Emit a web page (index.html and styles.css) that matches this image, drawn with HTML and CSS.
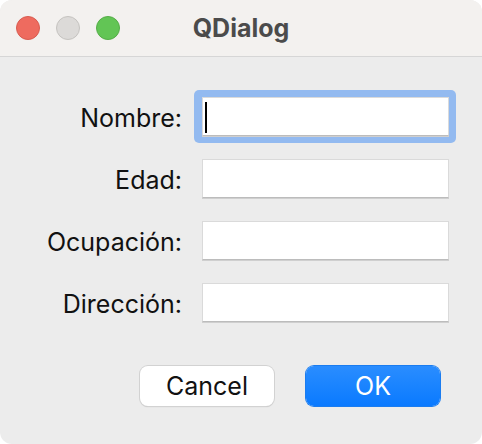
FILE: index.html
```html
<!DOCTYPE html>
<html>
<head>
<meta charset="utf-8">
<link rel="stylesheet" href="styles.css">
</head>
<body>
<div class="window">
  <div class="titlebar">
    <div class="lights">
      <span class="light red"></span>
      <span class="light gray"></span>
      <span class="light green"></span>
    </div>
    <div class="title">QDialog</div>
  </div>
  <div class="content">
    <div class="form">
      <label class="label">Nombre:</label>
      <div class="field focus"><input class="input" type="text"><span class="caret"></span></div>
      <label class="label">Edad:</label>
      <div class="field"><input class="input" type="text"></div>
      <label class="label">Ocupación:</label>
      <div class="field"><input class="input" type="text"></div>
      <label class="label">Dirección:</label>
      <div class="field"><input class="input" type="text"></div>
    </div>
    <div class="buttons">
      <button class="btn cancel">Cancel</button>
      <button class="btn ok">OK</button>
    </div>
  </div>
</div>
</body>
</html>
```
FILE: styles.css
```css
html, body {
  margin: 0;
  padding: 0;
  background: #ffffff;
}
.window {
  width: 482px;
  height: 444px;
  border-radius: 12px;
  overflow: hidden;
  background: #ececec;
  font-family: Inter, "Liberation Sans", Arial, sans-serif;
  display: flex;
  flex-direction: column;
}
.titlebar {
  height: 56px;
  flex: none;
  background: #f3f1ef;
  border-bottom: 1px solid #d6d6d6;
  display: flex;
  align-items: center;
  position: relative;
}
.lights {
  display: flex;
  gap: 16px;
  padding-left: 16px;
}
.light {
  width: 22px;
  height: 22px;
  border-radius: 50%;
  border: 1px solid;
  display: block;
}
.red { background: #ee6b5f; border-color: #d85c50; }
.gray { background: #dcdad8; border-color: #c5c3c0; }
.green { background: #62c555; border-color: #55ad48; }
.title {
  position: absolute;
  left: 0;
  right: 0;
  top: 0;
  bottom: 0;
  display: flex;
  align-items: center;
  justify-content: center;
  font-weight: 700;
  font-size: 25px;
  color: #4b4b4b;
}
.content {
  flex: 1;
  display: flex;
  flex-direction: column;
}
.form {
  display: grid;
  grid-template-columns: 182px 247px;
  column-gap: 20px;
  row-gap: 22px;
  padding-top: 40px;
}
.label {
  justify-self: end;
  align-self: center;
  font-size: 25px;
  color: #111111;
  padding-top: 2px;
}
.field {
  position: relative;
  height: 40px;
}
.field.focus::before {
  content: "";
  position: absolute;
  left: -8px;
  right: -7px;
  top: -7px;
  bottom: -6px;
  border-radius: 5px;
  background: #93baf0;
}
.input {
  position: relative;
  box-sizing: border-box;
  width: 247px;
  height: 39px;
  margin: 0;
  padding: 0 4px;
  border: 1px solid #dadada;
  border-bottom: 1px solid #bcbcbc;
  box-shadow: 0 1px 0 #cfcfcf;
  background: #ffffff;
  outline: none;
  display: block;
  font-family: inherit;
  font-size: 20px;
}
.caret {
  position: absolute;
  left: 3px;
  top: 5px;
  width: 2px;
  height: 31px;
  background: #000000;
}
.buttons {
  display: flex;
  gap: 32px;
  padding-left: 140px;
  padding-top: 43px;
}
.btn {
  width: 134px;
  height: 40px;
  border-radius: 8px;
  font-family: inherit;
  font-size: 25px;
  padding: 0;
  margin: 0;
  border: none;
}
.cancel {
  background: #ffffff;
  color: #111111;
  box-shadow: 0 0 0 1px #d2d2d2, 0 1px 1px #bfbfbf;
}
.ok {
  background: linear-gradient(#2a8dff, #0a7aff);
  color: #ffffff;
  box-shadow: 0 0 0 1px #1a7cf0;
}
```
